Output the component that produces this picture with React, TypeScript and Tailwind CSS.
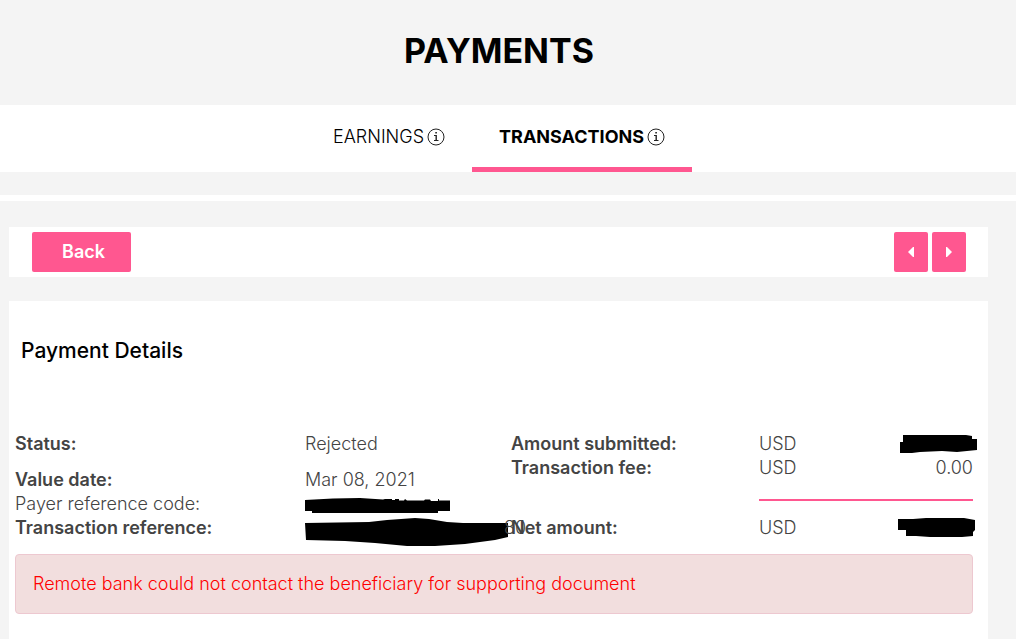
const tabs = [
    { id: 'earnings', label: 'EARNINGS', active: false },
    { id: 'transactions', label: 'TRANSACTIONS', active: true },
]

function InfoIcon() {
    return (
        <svg width="18" height="18" viewBox="0 0 18 18" fill="none" stroke="#222" aria-hidden="true" className="shrink-0">
            <circle cx="9" cy="9" r="8" />
            <path d="M7 7.5h2" />
            <path d="M9.2 7v5.500" strokeWidth="1.400" />
            <path d="M7 12.5h4.500" />
            <path d="M8.3 4.8h1.600" strokeWidth="1.600" />
        </svg>
    )
}

function Redacted({ d, width, height, className }: { d: string; width: number; height: number; className?: string }) {
    return (
        <svg width={width} height={height} viewBox={`0 0 ${width} ${height}`} className={className} role="img" aria-label="Redacted">
            <path d={d} fill="#000" />
        </svg>
    )
}

export default function App() {
    return (
        <div className="min-h-screen bg-[#f4f4f4] font-['Inter','Liberation_Sans',sans-serif] text-lg font-light text-[#444]">
            <header>
                <h1 className="pt-7 pr-[18px] pb-8 text-center text-[34px] leading-[45px] font-bold text-black">
                    PAYMENTS
                </h1>
                <nav className="flex justify-center bg-white pr-[18px]">
                    {tabs.map((tab) => (
                        <a
                            key={tab.id}
                            href={`#${tab.id}`}
                            className={
                                tab.active
                                    ? 'flex h-[67px] items-center gap-[3px] border-b-[5px] border-[#ff5790] px-[27px] pt-[2px] font-bold text-black'
                                    : 'flex h-[67px] items-center gap-[3px] border-b-[5px] border-transparent px-[27px] pt-[2px] text-black'
                            }
                        >
                            {tab.label}
                            <InfoIcon />
                        </a>
                    ))}
                </nav>
            </header>

            <div className="mt-[23px] h-[6px] bg-white" />

            <main className="pt-[26px] pr-7 pl-[9px]">
                {/* Toolbar */}
                <div className="flex h-[50px] items-center justify-between bg-white pr-[22px] pl-[23px]">
                    <button type="button" className="h-10 w-[99px] rounded-[2px] bg-[#ff5790] pl-1 font-semibold text-white">
                        Back
                    </button>
                    <div className="flex gap-1">
                        <button type="button" aria-label="Previous payment" className="flex h-10 w-[34px] items-center justify-center rounded-[2px] bg-[#ff5790]">
                            <svg width="6" height="10" viewBox="0 0 6 10" fill="#fff"><path d="M6 0v10H5L0 5l5-5z" /></svg>
                        </button>
                        <button type="button" aria-label="Next payment" className="flex h-10 w-[34px] items-center justify-center rounded-[2px] bg-[#ff5790]">
                            <svg width="6" height="10" viewBox="0 0 6 10" fill="#fff"><path d="M0 0v10h1l5-5-5-5z" /></svg>
                        </button>
                    </div>
                </div>

                {/* Payment details */}
                <section className="mt-6 bg-white px-[6px] pt-9 pb-10">
                    <h2 className="pl-[6px] text-[21px] leading-7 font-medium text-black">Payment Details</h2>

                    <div className="mt-[67px] grid grid-cols-[minmax(0,496fr)_minmax(0,462fr)] pr-[9px] leading-6">
                        <dl className="grid grid-cols-[minmax(0,290fr)_minmax(0,206fr)] content-start">
                            <dt className="mb-3 font-semibold">Status:</dt>
                            <dd>Rejected</dd>
                            <dt className="font-semibold">Value date:</dt>
                            <dd>Mar 08, 2021</dd>
                            <dt>Payer reference code:</dt>
                            <dd className="flex items-center pt-1">
                                <Redacted
                                    width={145}
                                    height={18}
                                    d="M0 3L28 1.5 55 1 78 2.5 80 2h7v1h3V2h4v1.500l5 0 1-1.500 2 1.500H119l1-1h5l1 1.500h7V2h1v1.500h11V14h-12v2H7v-2H0z"
                                />
                            </dd>
                            <dt className="font-semibold">Transaction reference:</dt>
                            <dd className="flex whitespace-nowrap">
                                <Redacted
                                    className="-mb-2 shrink-0"
                                    width={203}
                                    height={30}
                                    d="M0 7L64 6 82 4 110 2 124 3 142 6 158 7H203V21L190 24 160 28 130 30H102L70 27 40 25 1 24z"
                                />
                                <span className="-ml-1">80</span>
                            </dd>
                        </dl>

                        <dl className="grid grid-cols-[minmax(0,248fr)_minmax(0,214fr)] content-start">
                            <dt className="font-semibold">Amount submitted:</dt>
                            <dd className="flex justify-between">
                                USD
                                <Redacted
                                    className="-mr-1"
                                    width={77}
                                    height={22}
                                    d="M3 3H66L72 4V7H77V18L67 19 57 20 42 19 20 20 12 21H0V10H3z"
                                />
                            </dd>
                            <dt className="font-semibold">Transaction fee:</dt>
                            <dd className="flex justify-between">
                                USD
                                <span>0.00</span>
                            </dd>
                            <dt className="mt-9 font-semibold">Net amount:</dt>
                            <dd className="mt-[19px] flex justify-between border-t-2 border-[#ff5790] pt-[15px]">
                                USD
                                <Redacted
                                    className="-mr-[2px]"
                                    width={77}
                                    height={22}
                                    d="M0 3H15L28 2H66L77 4V14L75 16V20L64 21H32L18 20 8 20V14H0z"
                                />
                            </dd>
                        </dl>
                    </div>

                    <div role="alert" className="mt-[14px] mr-[9px] rounded border border-[#edc8d0] bg-[#f2dede] px-[17px] py-[17px] leading-6 text-[#ff0000]">
                        Remote bank could not contact the beneficiary for supporting document
                    </div>
                </section>
            </main>
        </div>
    )
}
